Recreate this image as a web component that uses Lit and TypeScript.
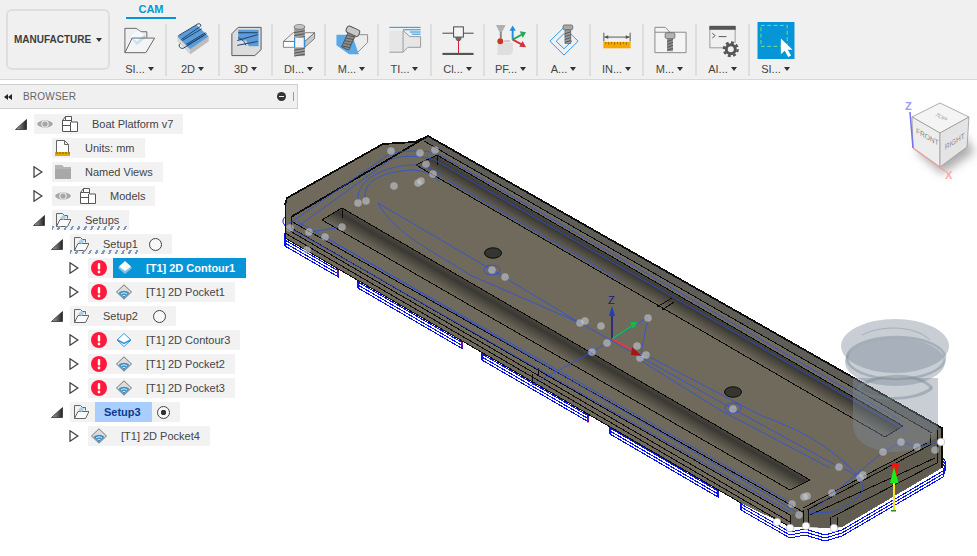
import { css, html, LitElement, svg, type TemplateResult } from 'lit'
import { customElement } from 'lit/decorators.js'
import { classMap } from 'lit/directives/class-map.js'

/* Toolbar icons, all drawn in a 38x38 box. */
const hatch = (x: number, y1: number, y2: number, w: number) => {
  const out = []
  for (let y = y1; y < y2; y += 3) {
    out.push(svg`<path d="M${x} ${y + 2}l${w} -2" stroke="#555" fill="none" />`)
  }
  return out
}

const TOOL_ICONS: Array<{ label: string; icon: TemplateResult }> = [
  {
    label: 'SI...',
    icon: svg`
      <path d="M3.5 31.5V6.5H15l5 3.5h6v6" fill="none" stroke="#666" />
      <path d="M8 15l8-7 8 5-8 7z" fill="#f6f9fb" stroke="#dde" stroke-width=".5" />
      <path d="M8 15l8 5 8-7 1 3-9 8z" fill="#b6d8ee" />
      <path d="M3.5 31.5 11 16.5h23l-9 15z" fill="#fff" fill-opacity=".25" stroke="#666" />
    `,
  },
  {
    label: '2D',
    icon: svg`
      <path d="M3 15v5l13 13 19-13v-5z" fill="#d6d6d6" />
      <path d="M16 28v5l19-13v-5z" fill="#bdbdbd" />
      <path d="M3 15 22.7 3 35 15 16 28z" fill="#5a9bd8" />
      <path d="M4 14 24 2c3-1 4 2 2 3L7 18M8 19 28 7M12 23 32 11M13 24 33 12M6 22c-3 2 0 6 3 5l21-13" fill="none" stroke="#1f3f66" />
    `,
  },
  {
    label: '3D',
    icon: svg`
      <path d="M4.5 12 11 5.500h23.500v23L28 34.500H4.500z" fill="#dcdcdc" stroke="#555" />
      <path d="M11 8h21v17H22l-3-6h-8z" fill="#5a9bd8" />
      <path d="M10 19l21-6M10 24l21-4M11 16c4 2 6 3 8 8M11 11h20" fill="none" stroke="#1f3f66" />
    `,
  },
  {
    label: 'DI...',
    icon: svg`
      <path d="M3 20 13 11h22l-10 9z" fill="#f2f2f2" stroke="#666" stroke-width=".8" />
      <path d="M3 20h22v6H3z" fill="#fff" stroke="#666" stroke-width=".8" />
      <path d="M25 20 35 11v6L25 26z" fill="#c8c8c8" stroke="#666" stroke-width=".8" />
      <rect x="14" y="4" width="11" height="31" fill="#9a9a9a" />
      <ellipse cx="19.500" cy="5" rx="5.500" ry="2.500" fill="#c4c4c4" stroke="#666" stroke-width=".7" />
      ${hatch(14, 9, 16, 11)} ${hatch(14, 27, 35, 11)}
      <rect x="15" y="16" width="9" height="10" fill="#f4f4f4" />
      <path d="M14.500 16v10M24.500 16v10" stroke="#1d8fe0" />
    `,
  },
  {
    label: 'M...',
    icon: svg`
      <path d="M25 13h10v8L23 33 17 21z" fill="#ececec" stroke="#777" stroke-width=".8" />
      <path d="M3 13h16l7 20H16L3 24z" fill="#5aa9e6" />
      <g transform="rotate(24 16 17)">
        <rect x="12.500" y="11" width="8" height="17" fill="#8c8c8c" stroke="#444" stroke-width=".7" />
        ${hatch(12.5, 13, 27, 8)}
        <rect x="9.500" y="5" width="14" height="7" rx="2.500" fill="#c8c8c8" stroke="#555" />
      </g>
    `,
  },
  {
    label: 'TI...',
    icon: svg`
      <path d="M3 31V9h14l7 6h11v11H22l-5 5z" fill="#e6e6e6" />
      <path d="M17 8.700 24 15h11M35 15v11H22l-5 5H3M17 9v22" fill="none" stroke="#999" />
      <path d="M3 5.500h32M17 8h18M24 10.300h11M26 12.500h9" fill="none" stroke="#1d8fe0" />
    `,
  },
  {
    label: 'Cl...',
    icon: svg`
      <path d="M3 11.500h11M24.500 11.500H35" stroke="#444" fill="none" />
      <rect x="14.500" y="5" width="10" height="10.500" fill="#f4f4f4" stroke="#444" />
      <path d="M16.500 15.500h6v2l-1.500 2h-3l-1.500-2z" fill="#666" />
      <path d="M19.500 19v13" stroke="#d11a2a" fill="none" />
      <path d="M3 32.800h32" stroke="#555" stroke-width="2.200" fill="none" />
    `,
  },
  {
    label: 'PF...',
    icon: svg`
      <path d="M3.500 3h10l-3.500 7H7z" fill="#b0b0b0" />
      <rect x="7.500" y="10" width="2" height="7" fill="#888" />
      <path d="M5 23l2-2h14v10l-3 3H5z" fill="#dedede" />
      <circle cx="8" cy="19.800" r="3" fill="#c8391a" />
      <rect x="12" y="18.800" width="6" height="1.500" fill="#bbb" />
      <path d="M20.700 18V8" stroke="#1d8fe0" stroke-width="2" fill="none" />
      <path d="M17.500 9l3.200-5.500L24 9z" fill="#1d8fe0" />
      <path d="M20.700 18 30 13" stroke="#2aa85a" stroke-width="2" fill="none" />
      <path d="M28 9.500l6.500 1-3.500 6z" fill="#2aa85a" />
      <path d="M20.700 18 30 23" stroke="#d1333f" stroke-width="2" fill="none" />
      <path d="M31 19.500l3.500 6.500-7-.5z" fill="#d1333f" />
    `,
  },
  {
    label: 'A...',
    icon: svg`
      <path d="M19 5.500 33.500 19.700 19 34 4.500 19.700zM19 12 27 19.700 19 27.500 11 19.700z" fill="none" stroke="#2f97e0" />
      <rect x="20" y="8" width="6" height="14" fill="#9a9a9a" stroke="#555" stroke-width=".6" />
      ${hatch(20, 10, 21, 6)}
      <rect x="18" y="3" width="10" height="5" rx="1.500" fill="#a8a8a8" stroke="#555" stroke-width=".7" />
    `,
  },
  {
    label: 'IN...',
    icon: svg`
      <path d="M5.500 11v9M32.500 11v9M6 15.500h26" fill="none" stroke="#555" />
      <path d="M6 15.500l4-2v4zM32 15.500l-4-2v4z" fill="#555" />
      <rect x="5" y="20.500" width="28" height="6.500" fill="#f5a800" />
      <path d="M7.500 20.500v2M10.500 20.500v3M13.500 20.500v2M16.500 20.500v3M19.500 20.500v2M22.500 20.500v3M25.500 20.500v2M28.500 20.500v3" stroke="#a06e00" fill="none" />
    `,
  },
  {
    label: 'M...',
    icon: svg`
      <path d="M3.500 31.500v-26H14l5 5h16.500v21zM3.500 10.500H19" fill="#f4f4f4" stroke="#888" />
      <rect x="16" y="17" width="6" height="13" fill="#8c8c8c" />
      ${hatch(16, 18, 29, 6)}
      <rect x="14" y="11" width="10" height="6" rx="1.500" fill="#b4b4b4" stroke="#555" stroke-width=".7" />
    `,
  },
  {
    label: 'AI...',
    icon: svg`
      <path d="M5.500 4.500h26v17M5.500 4.500v22h14" fill="none" stroke="#999" />
      <rect x="5" y="4" width="27" height="4" fill="#555" />
      <path d="M8 11.500 11 14l-3 2.500M14.500 15h8" fill="none" stroke="#555" />
      <circle cx="27" cy="28" r="4.600" fill="none" stroke="#555" stroke-width="3" />
      <circle cx="27" cy="28" r="7" fill="none" stroke="#555" stroke-width="2.500" stroke-dasharray="3 2.500" />
    `,
  },
  {
    label: 'SI...',
    icon: svg`
      <rect width="38" height="38" fill="#0696d7" />
      <rect x="3.500" y="3.500" width="27" height="21.500" fill="none" stroke="#6fe08a" stroke-dasharray="4 2.500" />
      <path d="M24 17v16l4-3.500 3.500 6.500 3-1.500-3.500-6h5z" fill="#fff" />
    `,
  },
]

@customElement('cam-toolbar')
export class CamToolbar extends LitElement {
  static styles = css`
    :host {
      display: flex;
      height: 79px;
      padding-left: 6px;
      background: #f0f0f0;
      border-bottom: 1px solid #d8d8d8;
      font-family: "Liberation Sans", Arial, sans-serif;
      color: #444;
    }

    .workspace {
      display: flex;
      align-items: center;
      justify-content: center;
      gap: 5px;
      box-sizing: border-box;
      width: 104px;
      height: 61px;
      margin: 9px 4px 0 0;
      border: 2px solid #dedede;
      border-radius: 6px;
      font-size: 10px;
      font-weight: 700;
      color: #3c3c3c;
    }

    .caret {
      width: 0;
      height: 0;
      border-style: solid;
      border-width: 4px 3px 0;
      border-color: #333 transparent transparent;
    }

    .tab {
      box-sizing: border-box;
      width: 50px;
      height: 19px;
      margin-left: 12px;
      border-bottom: 2px solid #0696d7;
      font-size: 11px;
      font-weight: 700;
      line-height: 18px;
      text-align: center;
      color: #0696d7;
    }

    .tools {
      display: flex;
      margin-top: 5px;
    }

    .tool {
      box-sizing: border-box;
      display: flex;
      flex-direction: column;
      width: 53px;
      height: 52px;
      border-right: 2px solid #dedede;
    }

    .tool:last-child {
      border-right: 0;
    }

    .tool svg {
      display: block;
      width: 38px;
      height: 38px;
      margin: -2px 0 0 7px;
    }

    .label {
      display: flex;
      align-items: center;
      justify-content: center;
      gap: 3px;
      width: 51px;
      height: 14px;
      margin-top: 3px;
      font-size: 11px;
      line-height: 14px;
      white-space: nowrap;
    }
  `

  render() {
    return html`
      <div class="workspace">MANUFACTURE <span class="caret"></span></div>
      <div>
        <div class="tab">CAM</div>
        <div class="tools">
          ${TOOL_ICONS.map(
            (t) => html`
              <div class="tool">
                <svg viewBox="0 0 38 38">${t.icon}</svg>
                <div class="label">${t.label}<span class="caret"></span></div>
              </div>
            `,
          )}
        </div>
      </div>
    `
  }
}

/* Tree icons, drawn in a 16x16 box. */
const eyeIcon = svg`
  <path d="M0 8c3-5 13-5 16 0-3 5-13 5-16 0z" fill="#a6a6a6" />
  <circle cx="8" cy="8" r="3.800" fill="#e8e8e8" />
  <circle cx="8" cy="8" r="2.600" fill="#a6a6a6" />
`
const modelIcon = svg`
  <path d="M.5 15.500V4.500L3.500.5h6V6h6v9.500zM.5 9.500h8M8.500 6v9.500M3.500.5v4H.5M3.500 4.500H9.500" fill="#fff" stroke="#555" />
`
const unitsIcon = svg`
  <path d="M1.500 12V.5h8l4 4V12M9.500.5v4h4" fill="#fff" stroke="#666" />
  <rect x="0" y="12" width="15" height="4" fill="#e3a800" />
  <path d="M2 12v2M5 12v2M8 12v2M11 12v2M14 12v2" stroke="#7a5a00" />
`
const folderIcon = svg`
  <path d="M0 1h7l2 2h7v3H0z" fill="#b5b5b5" />
  <rect y="5" width="16" height="10" fill="#a8a8a8" />
`
const setupIcon = svg`
  <path d="M1.500 14.500v-13h6l2 2h3v3" fill="none" stroke="#666" />
  <path d="M1.500 14.500 5 7.500h11l-3.500 7z" fill="#fff" fill-opacity=".6" stroke="#666" />
  <path d="M5 6l3-3 3.500 2-3 3z" fill="#a8cfe8" />
`
const errorIcon = svg`
  <circle cx="8" cy="8" r="8" fill="#ff1a3c" />
  <rect x="6.800" y="3" width="2.400" height="6.500" rx="1" fill="#fff" />
  <circle cx="8" cy="12" r="1.400" fill="#fff" />
`
const contourOnIcon = svg`
  <path d="M8 2 15 8 8 14 1 8z" fill="#7fc4ea" />
  <path d="M8 1 14 6.500 8 11 2 6.500z" fill="#fff" />
`
const pocketIcon = svg`
  <path d="M8 .8 15.500 8 8 15.200.5 8z" fill="#dcdcdc" stroke="#777" />
  <path d="M2.500 9c3-3 8-3 11 0L8 14.500z" fill="#3f8fc9" />
  <path d="M5 10c2-1.500 4-1.500 6 0M6.500 12c1-.8 2-.8 3 0" fill="none" stroke="#fff" stroke-width=".9" />
`
const contourIcon = svg`
  <path d="M8 1.500 15 8 8 14.500 1 8z" fill="#fff" stroke="#2f97e0" />
  <path d="M1.500 8 8 11.500 14.500 8" fill="none" stroke="#2f97e0" stroke-width="1.500" />
`

interface Node {
  level: number
  open?: boolean
  closed?: boolean
  icons: TemplateResult[]
  text: string
  hatched?: boolean
  selected?: 'op' | 'setup'
  radio?: 'off' | 'on' | 'off-wide'
}

const NODES: Node[] = [
  { level: 0, open: true, icons: [eyeIcon, modelIcon], text: 'Boat Platform v7' },
  { level: 1, icons: [unitsIcon], text: 'Units: mm' },
  { level: 1, closed: true, icons: [folderIcon], text: 'Named Views' },
  { level: 1, closed: true, icons: [eyeIcon, modelIcon], text: 'Models' },
  { level: 1, open: true, icons: [setupIcon], text: 'Setups', hatched: true },
  { level: 2, open: true, icons: [setupIcon], text: 'Setup1', hatched: true, radio: 'off' },
  { level: 3, closed: true, icons: [errorIcon, contourOnIcon], text: '[T1] 2D Contour1', selected: 'op' },
  { level: 3, closed: true, icons: [errorIcon, pocketIcon], text: '[T1] 2D Pocket1' },
  { level: 2, open: true, icons: [setupIcon], text: 'Setup2', radio: 'off-wide' },
  { level: 3, closed: true, icons: [errorIcon, contourIcon], text: '[T1] 2D Contour3' },
  { level: 3, closed: true, icons: [errorIcon, pocketIcon], text: '[T1] 2D Pocket2' },
  { level: 3, closed: true, icons: [errorIcon, pocketIcon], text: '[T1] 2D Pocket3' },
  { level: 2, open: true, icons: [setupIcon], text: 'Setup3', selected: 'setup', radio: 'on' },
  { level: 3, closed: true, icons: [pocketIcon], text: '[T1] 2D Pocket4' },
]

@customElement('browser-panel')
export class BrowserPanel extends LitElement {
  static styles = css`
    :host {
      position: absolute;
      left: 0;
      top: 4px;
      width: 298px;
      font-family: "Liberation Sans", Arial, sans-serif;
      font-size: 11px;
      color: #444;
    }

    .head {
      display: flex;
      align-items: center;
      box-sizing: border-box;
      height: 25px;
      padding-left: 4px;
      background: #f0f0f0;
      border: 1px solid #cfcfcf;
      border-left: 0;
      color: #666;
    }

    .rewind {
      display: flex;
      width: 19px;
    }

    .rewind i {
      width: 0;
      height: 0;
      border-style: solid;
      border-width: 3.5px 4.500px 3.500px 0;
      border-color: transparent #222 transparent transparent;
    }

    .title {
      flex: 1;
      font-size: 10px;
      letter-spacing: .02em;
    }

    .collapse {
      position: relative;
      width: 9px;
      height: 9px;
      margin-right: 6px;
      border-radius: 50%;
      background: #333;
    }

    .collapse::after {
      content: '';
      position: absolute;
      left: 2px;
      right: 2px;
      top: 4px;
      height: 1px;
      background: #eee;
    }

    .grip {
      width: 1px;
      height: 9px;
      margin-right: 3px;
      border: 1px solid #999;
      border-width: 0 1px 0 0;
    }

    .tree {
      padding-top: 3px;
    }

    .row {
      display: flex;
      align-items: center;
      height: 24px;
    }

    .lv0 { padding-left: 15px; }
    .lv1 { padding-left: 33px; }
    .lv2 { padding-left: 51px; }
    .lv3 { padding-left: 69px; }

    .exp {
      display: flex;
      flex: none;
      width: 19px;
    }

    .item {
      position: relative;
      display: flex;
      align-items: center;
      height: 20px;
      padding-right: 10px;
      background: #f2f2f2;
    }

    .slot {
      display: flex;
      flex: none;
      box-sizing: border-box;
      width: 25px;
      padding-left: 3px;
    }

    .slot svg {
      display: block;
      width: 16px;
      height: 16px;
    }

    .name {
      margin-left: 8px;
      white-space: nowrap;
    }

    .hatched::after {
      content: '';
      position: absolute;
      left: 0;
      right: 2px;
      bottom: 0;
      height: 4px;
      background: repeating-linear-gradient(115deg, #7f97b8 0 2px, transparent 2px 6px);
    }

    .hatched.short::after {
      right: 31px;
    }

    .op-on {
      display: flex;
      align-items: center;
      height: 20px;
      margin-right: -10px;
      padding-right: 11px;
      background: #0696d7;
      font-weight: 700;
      color: #fff;
    }

    .op-on .slot {
      padding-left: 4px;
    }

    .setup-on {
      display: flex;
      align-items: center;
      height: 20px;
      padding: 0 11px 0 1px;
      background: #a9cdfd;
      font-weight: 700;
      color: #0d3a8c;
    }

    .radio {
      box-sizing: border-box;
      width: 13px;
      height: 13px;
      margin-left: 11px;
      border: 1px solid #444;
      border-radius: 50%;
      background: #f8f8f8;
    }

    .radio.wide {
      margin-left: 15px;
    }

    .radio.on {
      margin-left: 5px;
      background: radial-gradient(circle, #333 0 2.500px, #f8f8f8 3px);
    }
  `

  private _expander(n: Node) {
    if (n.open) {
      return html`<svg width="12" height="11" viewBox="0 0 12 11">
        <defs>
          <linearGradient id="tri" x1="1" x2="0" y1="0" y2="0">
            <stop offset="0" stop-color="#222" />
            <stop offset="1" stop-color="#aaa" />
          </linearGradient>
        </defs>
        <path d="M11.500 .5v10H.5z" fill="url(#tri)" stroke="#333" stroke-width=".8" />
      </svg>`
    }
    if (n.closed) {
      return html`<svg width="10" height="12" viewBox="0 0 10 12">
        <path d="M1 .8 8.800 6 1 11.200z" fill="#fff" stroke="#444" stroke-width="1.300" />
      </svg>`
    }
    return html``
  }

  private _slot(icon: TemplateResult) {
    return html`<span class="slot"><svg viewBox="0 0 16 16">${icon}</svg></span>`
  }

  private _body(n: Node) {
    if (n.selected === 'op') {
      return html`
        ${this._slot(n.icons[0])}
        <span class="op-on">${this._slot(n.icons[1])}<span class="name">${n.text}</span></span>
      `
    }
    if (n.selected === 'setup') {
      return html`
        ${n.icons.map((i) => this._slot(i))}
        <span class="setup-on"><span class="name">${n.text}</span></span>
      `
    }
    return html`${n.icons.map((i) => this._slot(i))}<span class="name">${n.text}</span>`
  }

  render() {
    return html`
      <div class="head">
        <span class="rewind"><i></i><i></i></span>
        <span class="title">BROWSER</span>
        <span class="collapse"></span>
        <span class="grip"></span>
      </div>
      <div class="tree">
        ${NODES.map(
          (n) => html`
            <div class="row lv${n.level}">
              <span class="exp">${this._expander(n)}</span>
              <div class=${classMap({ item: true, hatched: !!n.hatched, short: !!n.hatched && !!n.radio })}>
                ${this._body(n)}
                ${n.radio
                  ? html`<span
                      class=${classMap({ radio: true, wide: n.radio === 'off-wide', on: n.radio === 'on' })}
                    ></span>`
                  : ''}
              </div>
            </div>
          `,
        )}
      </div>
    `
  }
}

/* Page coordinates of the CAD scene; the canvas viewBox starts at the toolbar's bottom. */
const DOTS: Array<[number, number]> = [
  [391, 151], [420, 153], [435, 150], [426, 164], [433, 174], [421, 181], [418, 183], [394, 186],
  [366, 201], [358, 203], [342, 227], [325, 237], [309, 232], [290, 228], [307, 250], [505, 277],
  [580, 323], [585, 321], [601, 326], [607, 343], [637, 346], [640, 358], [646, 355], [648, 318],
  [733, 409], [839, 467], [863, 475], [860, 478], [832, 493], [807, 496], [804, 497], [792, 504],
  [799, 515], [883, 452], [901, 442], [917, 447], [935, 450], [592, 352], [492, 270],
]
const WHITE_DOTS: Array<[number, number]> = [
  [777, 522], [790, 528], [806, 526], [834, 528], [941, 442],
]

/* Lowest of the three boundary passes; the other two are drawn above it. */
const OUTLINE = [
  'M285 239V246L338 276.700V270',
  'M358 281V288L462 348.400V342',
  'M482 353V360L588 421.500V415',
  'M610 427V434L718 497V490',
  'M741 503V510L790 538 805 535 825 541 842 536 943 477 946 468 940 461',
]

@customElement('cad-view')
export class CadView extends LitElement {
  static styles = css`
    :host {
      position: absolute;
      inset: 0;
    }

    svg {
      display: block;
      width: 977px;
      height: 476px;
    }

    text {
      font-family: "Liberation Sans", Arial, sans-serif;
    }
  `

  private _slotBand(id: string, pts: string, x: number, y: number) {
    return svg`
      <linearGradient id=${id} gradientUnits="userSpaceOnUse" x1=${x} y1=${y} x2=${x - 10.2} y2=${y + 17.7}>
        <stop offset="0" stop-color="#4c4940" />
        <stop offset=".3" stop-color="#3a3833" />
        <stop offset=".65" stop-color="#565247" />
        <stop offset="1" stop-color="#706a5d" />
      </linearGradient>
      <polygon points=${pts} fill="url(#${id})" stroke="#0c0c0c" shape-rendering="crispEdges" />
    `
  }

  private _tool() {
    return svg`
      <g fill="#7b8a99" fill-opacity=".42">
        <path d="M853 378V425C853 445 880 453 896 452 915 451 938 440 938 422V378z" />
        <ellipse cx="895" cy="346" rx="54" ry="27" />
        <ellipse cx="895" cy="362" rx="50" ry="24" />
      </g>
      <g fill="none" stroke="#77858f" stroke-opacity=".42">
        <ellipse cx="896" cy="358" rx="49" ry="21" stroke-width="2.500" />
        <path d="M858 388C870 375 915 370 932 388" stroke-width="3" />
        <path d="M858 388C870 402 915 402 932 388" stroke-width="3" />
        <path d="M862 335C880 325 915 325 930 340" />
      </g>
    `
  }

  private _cube() {
    return svg`
      <defs>
        <filter id="soft" x="-50%" y="-50%" width="200%" height="200%">
          <feGaussianBlur stdDeviation="5" />
        </filter>
      </defs>
      <path d="M915 150 942 174 975 152 964 136z" fill="#777" fill-opacity=".6" filter="url(#soft)" />
      <path d="M912 117 940 103 969 117 940 133z" fill="#f4f4f4" stroke="#999" stroke-width=".8" />
      <path d="M912 117 940 133V167L913 148z" fill="#ededed" stroke="#999" stroke-width=".8" />
      <path d="M940 133 969 117 967 147 940 167z" fill="#e4e4e4" stroke="#999" stroke-width=".8" />
      <text font-size="7.500" fill="#888" transform="matrix(.87 .5 -.03 1 916 133)">FRONT</text>
      <text font-size="7.500" fill="#888" transform="matrix(.84 -.52 .03 1 945 150)">RIGHT</text>
      <text font-size="6.500" fill="#999" transform="matrix(.8 .45 -.8 .45 934 115)">TOP</text>
      <path d="M910 112 913 148" stroke="#7272f0" stroke-width="1.500" fill="none" />
      <path d="M913 148 945 171" stroke="#f0a0a0" stroke-width="1.500" fill="none" />
      <text x="905" y="110" font-size="11" font-weight="700" fill="#9a9aff">Z</text>
      <text x="945" y="179" font-size="11" font-weight="700" fill="#ffa8a8">X</text>
    `
  }

  render() {
    return html`
      <svg viewBox="0 80 977 476">
        <!-- blue outer boundary -->
        ${[0, 3, 6].map(
          (d) => svg`<path d=${OUTLINE.join(' ')} transform="translate(0 ${d - 6})" fill="none" stroke="#0a14f0" stroke-width="1.100" shape-rendering="crispEdges" />`,
        )}
        <path d="M292 208c-5 2-8 5-6 8-3 2-4 6-2 8 1 3 4 5 8 6" fill="none" stroke="#0a14f0" />
        <path d="M295 211c-6 2-8 6-6 8-2 2-3 5-1 7" fill="none" stroke="#0a14f0" />
        <path d="M338 270v6M462 342v6M588 417v6" stroke="#d4141e" fill="none" />

        <!-- body -->
        <polygon
          points="285,205 287,198 383,144 415,142 428,136 942,428 942,468 842,527 830,528 805,527 790,527 741,503 285,238"
          fill="#706a5d"
          shape-rendering="crispEdges"
        />
        <polygon points="790,515 803,510 940,436 940,468 842,527 830,528 805,527 790,527" fill="#615c50" />
        <polygon points="428,136 942,428 932,433 424,141" fill="#5f5d57" />
        <g fill="none" stroke="#0c0c0c" shape-rendering="crispEdges">
          <path d="M291 217 428 136 942 428V468M285 205 287 198 383 144 415 142 428 136" stroke-width="1.800" />
          <path d="M424 141 932 433" />
          <path d="M285 205V238L741 503" />
        </g>

        ${this._slotBand('s1', '342,208 322,220 790,490 810,480', 342, 208)}
        ${this._slotBand('s2', '437,155 416,165 885,437 903,426', 437, 155)}

        <!-- front face edges -->
        <g fill="none" stroke="#0c0c0c" shape-rendering="crispEdges">
          <path d="M342 208v10M437 155v10" />
          <path d="M291 217V228L790 515" />
          <path d="M291 221 803 512" />
          <path d="M285 228 790 522" />
          <path d="M285 233 790 527" />
          <path d="M803 508 927 443M807 510 930 445M810 515 935 458M832 517 937 463" />
          <path d="M790 515V527M803 510V527M808 510V527M830 517V528M837 517V528" />
          <path d="M930 434V445M937 430V463" />
          <path d="M532 374v9M538 368v7M657 307 672 298M662 310 674 302" />
        </g>
        <ellipse cx="493" cy="253" rx="8.500" ry="5.200" fill="#37352f" stroke="#0c0c0c" />
        <ellipse cx="733" cy="392" rx="8.500" ry="5.200" fill="#37352f" stroke="#0c0c0c" />

        <!-- toolpaths -->
        <g fill="none" stroke="#2b50e0" stroke-width=".8">
          <path d="M290 223 388 155C398 150 420 150 437 153L620 258 900 420" />
          <path d="M300 225 390 160C400 155 420 155 435 160L640 278 905 430" />
          <path d="M358 200C356 180 385 165 415 165 425 165 440 172 447 180L620 280" />
          <path d="M366 201C360 180 385 172 410 170 425 170 433 175 440 182" />
          <path d="M378 203 492 270 580 323 614 342 733 409 839 467C853 472 863 480 863 487 863 497 850 504 833 512L810 513" />
          <path d="M378 203C395 235 440 255 470 275L580 323" />
          <path d="M310 232 342 227M290 228 790 512" />
          <path d="M298 222 793 504" />
          <path d="M325 237 777 500 800 515" />
          <path d="M528 387 592 352 607 343 648 317" />
          <path d="M640 360 720 410 830 468" />
          <path d="M646 355 760 415C800 430 830 445 860 478" />
          <path d="M883 452 901 442 917 447 938 442" />
          <path d="M810 513 883 452" />
          <path d="M648 318 640 358" />
        </g>
        <ellipse cx="733" cy="408" rx="8" ry="5" fill="none" stroke="#2b50e0" stroke-width=".8" />
        <ellipse cx="492" cy="270" rx="8" ry="5" fill="none" stroke="#2b50e0" stroke-width=".8" />
        <ellipse cx="592" cy="352" rx="4" ry="3.500" fill="none" stroke="#2b50e0" stroke-width=".8" />

        ${this._tool()}

        <!-- link points -->
        ${DOTS.map(([x, y]) => svg`<circle cx=${x} cy=${y} r="3.800" fill="#c6cad2" fill-opacity=".6" />`)}
        ${WHITE_DOTS.map(
          ([x, y]) => svg`<circle cx=${x} cy=${y} r="3.800" fill="#fff" stroke="#aaa" stroke-width=".6" />`,
        )}

        <!-- origin gizmo -->
        <path d="M612 339V315" stroke="#1a1a80" stroke-width="1.500" fill="none" />
        <path d="M609 316 612 306 615 316z" fill="#1f3fb8" />
        <text x="608" y="304" font-size="11" fill="#1a1a80">Z</text>
        <path d="M612 339 632 326" stroke="#17b84a" stroke-width="1.500" fill="none" />
        <path d="M630 322 638 322 633 329z" fill="#17b84a" />
        <path d="M612 339 634 351" stroke="#e83a3a" stroke-width="1.500" fill="none" />
        <path d="M632 347 642 356 631 355z" fill="#a81414" />

        <!-- tool tip marker -->
        <path d="M894 483V511" stroke="#f0e61e" stroke-width="2" fill="none" />
        <path d="M891.500 463H899.500L896 478H894z" fill="#f01414" />
        <path d="M894 467 898.500 483H890z" fill="#16f016" />
        <rect x="891" y="510" width="5" height="1.500" fill="#2a8a2a" />

        ${this._cube()}
      </svg>
    `
  }
}

@customElement('app-root')
export class AppRoot extends LitElement {
  static styles = css`
    :host {
      display: block;
      width: 977px;
      height: 556px;
      overflow: hidden;
      background: #fff;
    }

    .viewport {
      position: relative;
      height: 476px;
    }
  `

  render() {
    return html`
      <cam-toolbar></cam-toolbar>
      <div class="viewport">
        <cad-view></cad-view>
        <browser-panel></browser-panel>
      </div>
    `
  }
}
